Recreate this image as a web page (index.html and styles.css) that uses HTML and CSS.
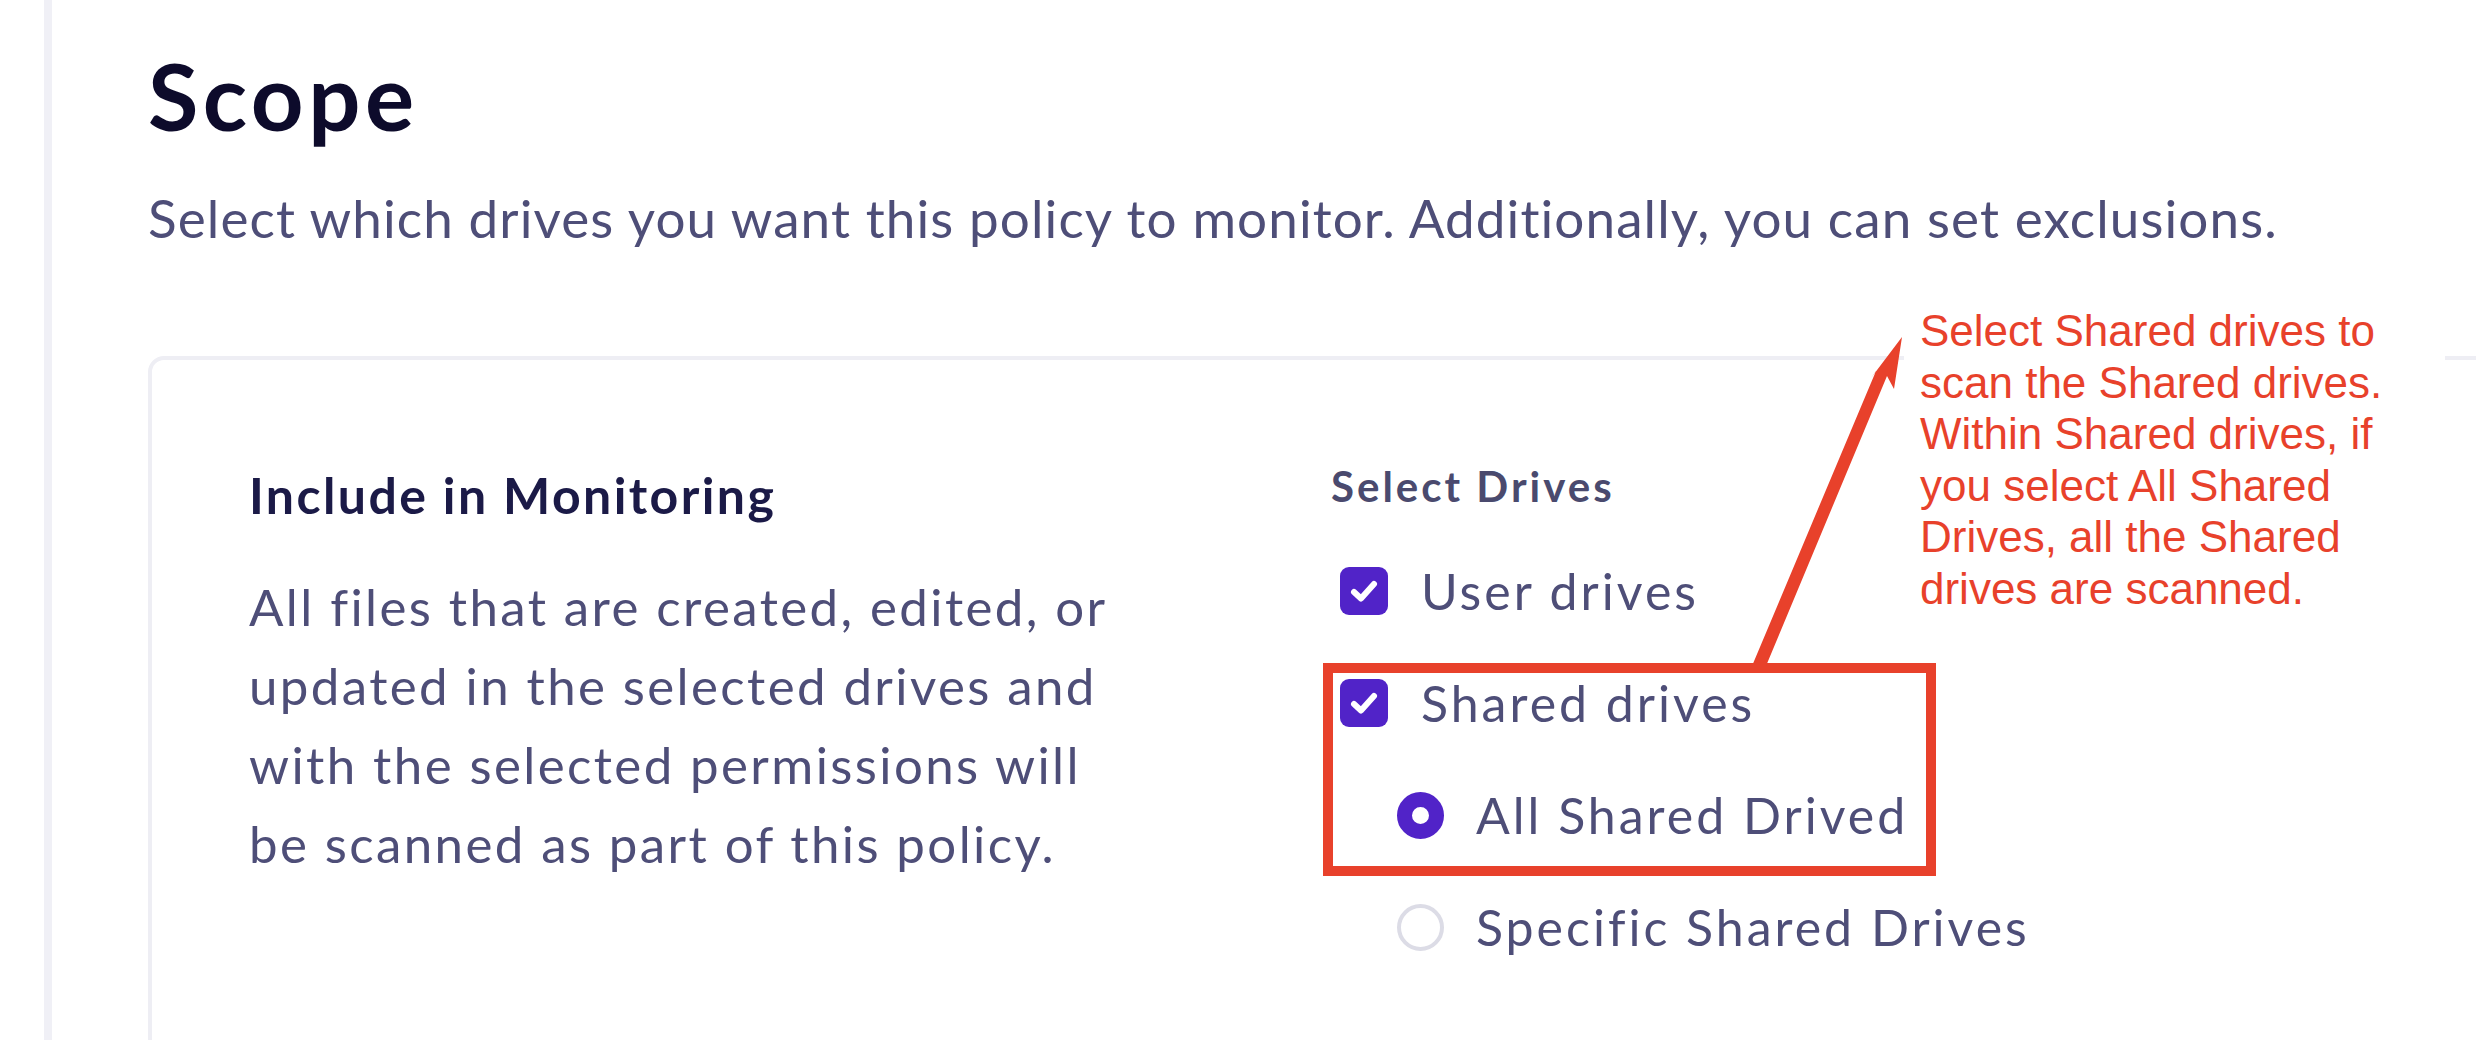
FILE: index.html
```html
<!DOCTYPE html>
<html lang="en">
<head>
<meta charset="utf-8">
<title>Scope</title>
<link rel="stylesheet" href="styles.css">
</head>
<body>
<div class="page">
  <div class="rail"></div>
  <main class="main">
    <h1 class="title">Scope</h1>
    <p class="subtitle">Select which drives you want this policy to monitor. Additionally, you can set exclusions.</p>
    <section class="card">
      <div class="col-info">
        <h2 class="info-title">Include in Monitoring</h2>
        <p class="info-text">All files that are created, edited, or<br>updated in the selected drives and<br>with the selected permissions will<br>be scanned as part of this policy.</p>
      </div>
      <div class="col-drives">
        <div class="drives-label">Select Drives</div>
        <div class="options">
          <label class="option">
            <span class="checkbox"><svg viewBox="0 0 48 48" width="48" height="48"><path d="M14 25 L21 31.5 L34 17" fill="none" stroke="#fff" stroke-width="6" stroke-linecap="round" stroke-linejoin="round"/></svg></span>
            <span class="option-text">User drives</span>
          </label>
          <label class="option">
            <span class="checkbox"><svg viewBox="0 0 48 48" width="48" height="48"><path d="M14 25 L21 31.5 L34 17" fill="none" stroke="#fff" stroke-width="6" stroke-linecap="round" stroke-linejoin="round"/></svg></span>
            <span class="option-text">Shared drives</span>
          </label>
          <label class="option option-sub">
            <span class="radio radio-on"></span>
            <span class="option-text">All Shared Drived</span>
          </label>
          <label class="option option-sub">
            <span class="radio"></span>
            <span class="option-text">Specific Shared Drives</span>
          </label>
        </div>
      </div>
    </section>
  </main>
</div>

<div class="note">Select Shared drives to<br>scan the Shared drives.<br>Within Shared drives, if<br>you select All Shared<br>Drives, all the Shared<br>drives are scanned.</div>
<div class="highlight"></div>
<svg class="arrow" width="2476" height="1040" viewBox="0 0 2476 1040">
  <polygon points="1902,337 1894,389 1887,376 1766,666 1752,666 1876,371 1871,378" fill="#e8412b"/>
</svg>
</body>
</html>
```

FILE: styles.css
```css
html, body {
  margin: 0;
  padding: 0;
  background: #ffffff;
  overflow: hidden;
}

body {
  width: 2476px;
  height: 1040px;
  position: relative;
  font-family: Lato, "Open Sans", sans-serif;
}

.page {
  display: flex;
  height: 1040px;
}

.rail {
  flex: 0 0 8px;
  margin-left: 44px;
  background: #f0f0f6;
}

.main {
  flex: 1;
  padding-left: 96px;
  padding-top: 46px;
  min-width: 0;
}

.title {
  margin: 0;
  font-size: 92px;
  line-height: 100px;
  font-weight: 700;
  color: #0d0b2b;
  letter-spacing: 4.5px;
}

.subtitle {
  margin: 40px 0 0;
  font-size: 53px;
  line-height: 64px;
  color: #4e4e78;
  letter-spacing: 1.1px;
  white-space: nowrap;
}

.card {
  margin-top: 106px;
  margin-right: -200px;
  border: 4px solid #eeeef4;
  border-radius: 16px;
  min-height: 900px;
  box-sizing: border-box;
  padding: 101px 0 0 97px;
  display: grid;
  grid-template-columns: 1082px 1fr;
}

.info-title {
  margin: 4px 0 0;
  font-size: 50px;
  line-height: 60px;
  font-weight: 700;
  color: #1b1a47;
  letter-spacing: 2.4px;
}

.info-text {
  margin: 42px 0 0;
  font-size: 51px;
  line-height: 79px;
  color: #4e4e78;
  letter-spacing: 2.4px;
  white-space: nowrap;
}

.drives-label {
  font-size: 42px;
  line-height: 50px;
  font-weight: 700;
  color: #4a4a6e;
  letter-spacing: 3px;
}

.options {
  margin-top: 56px;
  display: flex;
  flex-direction: column;
  gap: 64px;
}

.option {
  display: flex;
  align-items: center;
  height: 48px;
  padding-left: 9px;
}

.option-sub {
  padding-left: 66px;
}

.checkbox {
  width: 48px;
  height: 48px;
  border-radius: 9px;
  background: #5123c8;
  flex: 0 0 48px;
  display: block;
}

.checkbox svg {
  display: block;
}

.radio {
  width: 47px;
  height: 47px;
  box-sizing: border-box;
  border-radius: 50%;
  border: 4px solid #dcdce6;
  flex: 0 0 47px;
  display: block;
}

.radio-on {
  border: 15px solid #5123c8;
}

.option-text {
  margin-left: 33px;
  font-size: 50px;
  line-height: 48px;
  color: #4e4e78;
  letter-spacing: 3px;
  white-space: nowrap;
}

.option-sub .option-text {
  margin-left: 32px;
}

/* annotation overlay */
.note {
  position: absolute;
  left: 1904px;
  top: 300px;
  width: 541px;
  height: 330px;
  box-sizing: border-box;
  padding: 5px 0 0 16px;
  background: #ffffff;
  font-family: "Liberation Sans", Arial, sans-serif;
  font-size: 44px;
  line-height: 51.5px;
  color: #e8412b;
  white-space: nowrap;
}

.highlight {
  position: absolute;
  left: 1323px;
  top: 663px;
  width: 613px;
  height: 213px;
  box-sizing: border-box;
  border: 10px solid #e8412b;
}

.arrow {
  position: absolute;
  left: 0;
  top: 0;
  pointer-events: none;
}
```
